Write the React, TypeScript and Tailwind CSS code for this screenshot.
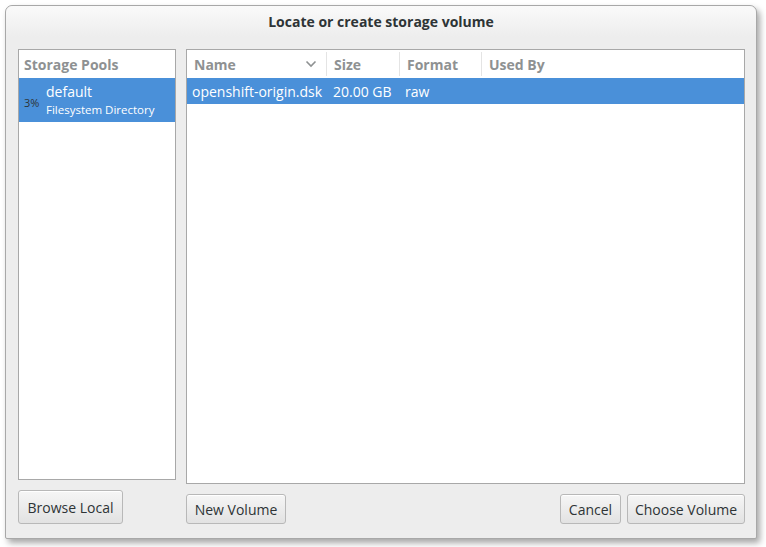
import React from "react";

const font = { fontFamily: '"Open Sans", "DejaVu Sans", sans-serif' };

function Btn({ children, className = "" }: { children: React.ReactNode; className?: string }) {
  return (
    <div
      className={
        "flex items-center justify-center rounded-[3px] border border-[#b8b8b8] bg-gradient-to-b from-[#f6f6f6] to-[#e2e2e2] text-[14px] text-[#2e3436] shadow-[inset_0_1px_0_#ffffff] " +
        className
      }
    >
      {children}
    </div>
  );
}

export default function App() {
  return (
    <div className="w-[766px] h-[547px] bg-white pl-[5px] pt-[5px]" style={font}>
      <div className="w-[752px] h-[534px] rounded-t-[7px] rounded-b-[2px] border border-[#a8a8a8] bg-[#ededed] shadow-[3px_4px_6px_rgba(0,0,0,0.35)] flex flex-col">
        <div className="h-[31px] shrink-0 rounded-t-[7px] bg-gradient-to-b from-[#fafafa] to-[#ededed] flex items-center justify-center pb-[1px]">
          <span className="text-[14px] font-bold text-[#2e3436]">Locate or create storage volume</span>
        </div>
        <div className="flex-1 flex gap-[10px] pl-[12px] pr-[11px] pt-[12px] pb-[14px]">
          {/* left column */}
          <div className="w-[158px] flex flex-col gap-[10px]">
            <div className="flex-1 border border-[#a8a8a8] bg-white flex flex-col">
              <div className="h-[28px] flex items-center px-[5px] text-[14px] font-bold text-[#8e9192]">Storage Pools</div>
              <div className="h-[44px] bg-[#4a90d9] flex items-center pl-[5px]">
                <span className="text-[11px] text-[#2e3436] mt-[6px] w-[22px]">3%</span>
                <div className="flex flex-col leading-none">
                  <span className="text-[14px] text-white mt-[1px]">default</span>
                  <span className="text-[11.5px] text-white mt-[5px]">Filesystem Directory</span>
                </div>
              </div>
            </div>
            <Btn className="h-[34px] w-[105px]">Browse Local</Btn>
          </div>
          {/* right column */}
          <div className="flex-1 flex flex-col gap-[10px]">
            <div className="flex-1 border border-[#a8a8a8] bg-white flex flex-col">
              <div className="h-[28px] flex items-stretch text-[14px] font-bold text-[#8e9192]">
                <div className="w-[140px] flex items-center justify-between px-[7px] border-r border-[#e4e4e4] my-[2px]">
                  <span>Name</span>
                  <svg width="12" height="8" viewBox="0 0 12 8" className="mr-[2px]">
                    <path d="M1.5 1.5 L6 6 L10.5 1.5" fill="none" stroke="#8e9192" strokeWidth="1.6" />
                  </svg>
                </div>
                <div className="w-[73px] flex items-center px-[7px] border-r border-[#e4e4e4] my-[2px]">Size</div>
                <div className="w-[82px] flex items-center px-[7px] border-r border-[#e4e4e4] my-[2px]">Format</div>
                <div className="flex-1 flex items-center px-[7px] my-[2px]">Used By</div>
              </div>
              <div className="h-[26px] bg-[#4a90d9] flex items-center text-[14px] text-white pt-[1px]">
                <div className="w-[140px] pl-[5px]">openshift-origin.dsk</div>
                <div className="w-[73px] pl-[6px]">20.00 GB</div>
                <div className="w-[82px] pl-[5px]">raw</div>
              </div>
            </div>
            <div className="flex items-center justify-between">
              <Btn className="h-[30px] w-[100px]">New Volume</Btn>
              <div className="flex gap-[6px]">
                <Btn className="h-[30px] w-[61px]">Cancel</Btn>
                <Btn className="h-[30px] w-[118px]">Choose Volume</Btn>
              </div>
            </div>
          </div>
        </div>
      </div>
    </div>
  );
}
